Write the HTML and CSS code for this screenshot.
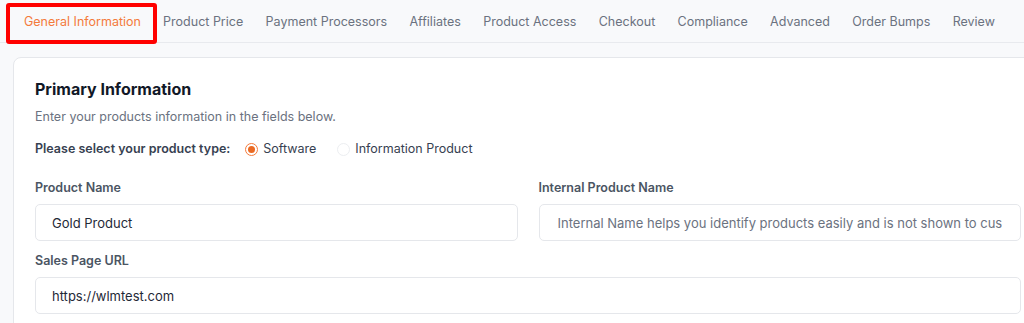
FILE: index.html
```html
<!DOCTYPE html>
<html lang="en">
<head>
    <meta charset="UTF-8">
    <meta name="viewport" content="width=device-width, initial-scale=1.0">
    <title>Edit Product</title>
    <link rel="stylesheet" href="styles.css">
</head>
<body>
    <nav class="tabs">
        <a href="#" class="tab active">General Information</a>
        <a href="#" class="tab">Product Price</a>
        <a href="#" class="tab">Payment Processors</a>
        <a href="#" class="tab">Affiliates</a>
        <a href="#" class="tab">Product Access</a>
        <a href="#" class="tab">Checkout</a>
        <a href="#" class="tab">Compliance</a>
        <a href="#" class="tab">Advanced</a>
        <a href="#" class="tab">Order Bumps</a>
        <a href="#" class="tab">Review</a>
    </nav>

    <div class="card">
        <h2 class="card-title">Primary Information</h2>
        <p class="card-subtitle">Enter your products information in the fields below.</p>

        <div class="type-row">
            <span class="type-label">Please select your product type:</span>
            <label class="radio">
                <input type="radio" name="ptype" checked>
                <span class="dot"></span>
                Software
            </label>
            <label class="radio">
                <input type="radio" name="ptype">
                <span class="dot"></span>
                Information Product
            </label>
        </div>

        <div class="field-grid">
            <div class="field">
                <label for="pname">Product Name</label>
                <input type="text" id="pname" value="Gold Product">
            </div>
            <div class="field">
                <label for="iname">Internal Product Name</label>
                <input type="text" id="iname" class="wide-pad" placeholder="Internal Name helps you identify products easily and is not shown to customers">
            </div>
            <div class="field full">
                <label for="surl">Sales Page URL</label>
                <input type="text" id="surl" value="https://wlmtest.com">
            </div>
        </div>
    </div>
</body>
</html>
```

FILE: styles.css
```css
* {
    margin: 0;
    padding: 0;
    box-sizing: border-box;
    font-family: 'Inter', 'Liberation Sans', sans-serif;
}

html, body {
    overflow: hidden;
}

body {
    background-color: #f8f9fb;
    color: #111827;
    width: 1024px;
    height: 323px;
}

/* Tab bar */
.tabs {
    display: flex;
    height: 43px;
    padding: 1px 0 0 13px;
    border-bottom: 1px solid #e8eaee;
}

.tab {
    position: relative;
    display: flex;
    align-items: center;
    padding: 0 11.2px;
    font-size: 12.5px;
    color: #6b7280;
    text-decoration: none;
    white-space: nowrap;
}

.tab:first-child {
    padding: 0 11px;
}

.tab.active {
    color: #f47b3c;
}

/* red highlight box around the active tab */
.tab.active::after {
    content: '';
    position: absolute;
    top: 2px;
    left: -7px;
    right: -5px;
    bottom: -2px;
    border: 4px solid #ff0000;
    border-radius: 3px;
}

/* Card */
.card {
    margin: 14px 0 0 13px;
    width: 1030px;
    background: white;
    border: 1px solid #e5e7eb;
    border-radius: 8px;
    padding: 19px 21px 20px;
}

.card-title {
    font-size: 16px;
    font-weight: 700;
    color: #111827;
    line-height: 24px;
}

.card-subtitle {
    margin-top: 8px;
    font-size: 12.5px;
    color: #6b7280;
    line-height: 16px;
}

.type-row {
    display: flex;
    align-items: center;
    margin-top: 16px;
    font-size: 12.5px;
    line-height: 16px;
}

.type-label {
    font-weight: 600;
    color: #374151;
    margin-right: 15px;
}

.radio {
    display: flex;
    align-items: center;
    color: #374151;
    margin-right: 21px;
    cursor: pointer;
}

.radio input {
    display: none;
}

.radio .dot {
    width: 13px;
    height: 13px;
    border-radius: 50%;
    border: 1px solid #eceef1;
    margin-right: 5px;
    position: relative;
}

.radio input:checked + .dot {
    border-color: #f47b3c;
}

.radio input:checked + .dot::after {
    content: '';
    position: absolute;
    top: 2px;
    left: 2px;
    width: 7px;
    height: 7px;
    border-radius: 50%;
    background: #ea6a23;
}

/* Fields */
.field-grid {
    display: grid;
    grid-template-columns: 1fr 1fr;
    column-gap: 21px;
    row-gap: 12px;
    margin-top: 23px;
}

.field.full {
    grid-column: 1 / -1;
}

.field label {
    display: block;
    font-size: 12.5px;
    font-weight: 600;
    color: #4b5563;
    line-height: 16px;
    margin-bottom: 8px;
}

.field input {
    width: 100%;
    height: 37px;
    padding: 0 16px;
    border: 1px solid #e5e7eb;
    border-radius: 5px;
    background: white;
    font-size: 13px;
    color: #1f2937;
    outline: none;
}

.field input.wide-pad {
    padding: 0 18px;
}

.field input::placeholder {
    color: #6b7280;
}
```
